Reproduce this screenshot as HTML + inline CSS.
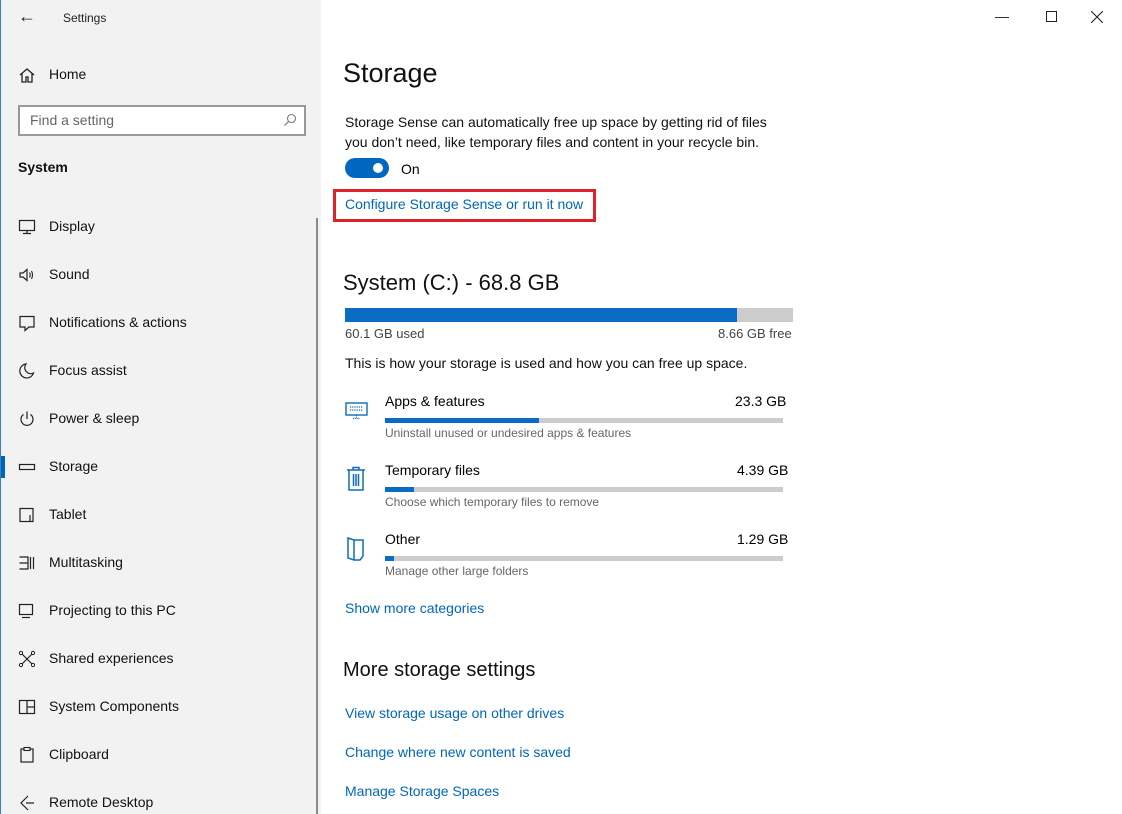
<!DOCTYPE html>
<html><head><meta charset="utf-8"><style>
*{margin:0;padding:0;box-sizing:border-box}
body{width:1122px;height:814px;overflow:hidden;font-family:"Liberation Sans",sans-serif;background:#fff;position:relative;color:#000}
.side{position:absolute;left:0;top:0;width:321px;height:814px;background:#f2f2f2;border-left:1px solid #3a7fc0}
.t{position:absolute;white-space:nowrap}
.nav{position:absolute;left:48px;font-size:14px;color:#111}
.ic{position:absolute;left:17px;width:18px;height:18px}
a,.lk{color:#0067b8;font-size:14px}
.bar{position:absolute;height:5px;background:#ccc}
.bar i{display:block;height:100%;background:#0a6cc4}
</style></head><body>
<div class="side">
<div class="t" style="left:17px;top:6px;font-size:18px;color:#222">&#8592;</div>
<div class="t" style="left:62px;top:11px;font-size:12px;color:#222">Settings</div>
<svg class="ic" style="top:66px" viewBox="0 0 18 18"><path d="M2 9 L9 3 L16 9 M4 7.5 V16 H8 V11 H10 V16 H14 V7.5" fill="none" stroke="#222" stroke-width="1.3"/></svg>
<div class="nav" style="top:66px">Home</div>
<div style="position:absolute;left:17px;top:105px;width:288px;height:31px;border:2px solid #999;background:#fff"></div>
<div class="t" style="left:29px;top:112px;font-size:14px;color:#666">Find a setting</div>
<svg style="position:absolute;left:282px;top:113px" width="14" height="14" viewBox="0 0 14 14"><circle cx="8.5" cy="5.5" r="4" fill="none" stroke="#777" stroke-width="1.1"/><path d="M5.5 8.5 L1.5 12.5" stroke="#777" stroke-width="1.2"/></svg>
<div class="t" style="left:17px;top:159px;font-size:14px;font-weight:bold;color:#111">System</div>
<div style="position:absolute;left:315px;top:218px;width:2px;height:596px;background:#8a8a8a"></div>
<div style="position:absolute;left:0;top:456px;width:4px;height:22px;background:#0067b8"></div>

<svg class="ic" style="top:218px" viewBox="0 0 18 18"><rect x="1.5" y="2.5" width="15" height="10" fill="none" stroke="#222" stroke-width="1.2"/><path d="M9 12.5V15.5M5 15.5H13" stroke="#222" stroke-width="1.2"/></svg>
<div class="nav" style="top:218px">Display</div>
<svg class="ic" style="top:266px" viewBox="0 0 18 18"><path d="M2 7H5L9 3.5V14.5L5 11H2Z" fill="none" stroke="#222" stroke-width="1.2"/><path d="M11.5 6.5Q13 9 11.5 11.5M13.5 5Q15.5 9 13.5 13" fill="none" stroke="#222" stroke-width="1.1"/></svg>
<div class="nav" style="top:266px">Sound</div>
<svg class="ic" style="top:314px" viewBox="0 0 18 18"><path d="M2 2.5H16V13H11L7 16.5V13H2Z" fill="none" stroke="#222" stroke-width="1.2"/></svg>
<div class="nav" style="top:314px">Notifications &amp; actions</div>
<svg class="ic" style="top:362px" viewBox="0 0 18 18"><path d="M8 2A7 7 0 1 0 15.5 11 A6 6 0 0 1 8 2Z" fill="none" stroke="#222" stroke-width="1.2"/></svg>
<div class="nav" style="top:362px">Focus assist</div>
<svg class="ic" style="top:410px" viewBox="0 0 18 18"><path d="M5.5 4.5A6 6 0 1 0 12.5 4.5M9 1.5V9" fill="none" stroke="#222" stroke-width="1.2"/></svg>
<div class="nav" style="top:410px">Power &amp; sleep</div>
<svg class="ic" style="top:458px" viewBox="0 0 18 18"><rect x="1.5" y="6.5" width="15" height="5" fill="none" stroke="#222" stroke-width="1.2"/></svg>
<div class="nav" style="top:458px">Storage</div>
<svg class="ic" style="top:506px" viewBox="0 0 18 18"><rect x="2" y="2.5" width="13" height="13" fill="none" stroke="#222" stroke-width="1.2"/><path d="M12 9V15.5" stroke="#222" stroke-width="1.2"/></svg>
<div class="nav" style="top:506px">Tablet</div>
<svg class="ic" style="top:554px" viewBox="0 0 18 18"><path d="M1.5 3H10V15H1.5M1.5 9H10M12.5 3V15M15.5 3V15" fill="none" stroke="#222" stroke-width="1.2"/></svg>
<div class="nav" style="top:554px">Multitasking</div>
<svg class="ic" style="top:602px" viewBox="0 0 18 18"><rect x="1.5" y="2.5" width="13" height="10" fill="none" stroke="#222" stroke-width="1.2"/><path d="M4 15.5H12" stroke="#222" stroke-width="1.2"/></svg>
<div class="nav" style="top:602px">Projecting to this PC</div>
<svg class="ic" style="top:650px" viewBox="0 0 18 18"><path d="M3 3L15 15M15 3L3 15" stroke="#222" stroke-width="1.2"/><circle cx="3" cy="3" r="1.6" fill="#fff" stroke="#222"/><circle cx="15" cy="3" r="1.6" fill="#fff" stroke="#222"/><circle cx="3" cy="15" r="1.6" fill="#fff" stroke="#222"/><circle cx="15" cy="15" r="1.6" fill="#fff" stroke="#222"/></svg>
<div class="nav" style="top:650px">Shared experiences</div>
<svg class="ic" style="top:698px" viewBox="0 0 18 18"><rect x="1.5" y="2.5" width="15" height="13" fill="none" stroke="#222" stroke-width="1.2"/><path d="M9 2.5V15.5M9 9H16.5" stroke="#222" stroke-width="1.2"/></svg>
<div class="nav" style="top:698px">System Components</div>
<svg class="ic" style="top:746px" viewBox="0 0 18 18"><rect x="3" y="3" width="12" height="13" fill="none" stroke="#222" stroke-width="1.2"/><rect x="6" y="1.5" width="6" height="3" fill="#f2f2f2" stroke="#222" stroke-width="1.1"/></svg>
<div class="nav" style="top:746px">Clipboard</div>
<svg class="ic" style="top:794px" viewBox="0 0 18 18"><path d="M10 2L3 9L10 16M8 9H16" fill="none" stroke="#222" stroke-width="1.2"/></svg>
<div class="nav" style="top:794px">Remote Desktop</div>
</div>

<div class="t" style="left:995px;top:8px;font-size:14px;color:#222">&#8212;</div>
<div style="position:absolute;left:1046px;top:11px;width:11px;height:11px;border:1px solid #222"></div>
<svg style="position:absolute;left:1091px;top:11px" width="12" height="12"><path d="M0 0L12 12M12 0L0 12" stroke="#222" stroke-width="1.1"/></svg>

<div class="t" style="left:343px;top:58px;font-size:27px;color:#111">Storage</div>
<div class="t" style="left:345px;top:112px;font-size:14px;line-height:20px;color:#111">Storage Sense can automatically free up space by getting rid of files<br>you don’t need, like temporary files and content in your recycle bin.</div>
<div style="position:absolute;left:345px;top:158px;width:44px;height:20px;border-radius:10px;background:#0067c0"></div>
<div style="position:absolute;left:373px;top:163px;width:10px;height:10px;border-radius:5px;background:#fff"></div>
<div class="t" style="left:401px;top:161px;font-size:14px">On</div>
<div style="position:absolute;left:333px;top:189px;width:263px;height:33px;border:3px solid #e0202a"></div>
<div class="t lk" style="left:345px;top:196px">Configure Storage Sense or run it now</div>

<div class="t" style="left:343px;top:270px;font-size:22px;color:#111">System (C:) - 68.8 GB</div>
<div style="position:absolute;left:345px;top:308px;width:448px;height:14px;background:#ccc"><div style="width:392px;height:100%;background:#0a6cc4"></div></div>
<div class="t" style="left:345px;top:326px;font-size:13px;color:#444">60.1 GB used</div>
<div class="t" style="left:718px;top:326px;font-size:13px;color:#444">8.66 GB free</div>
<div class="t" style="left:345px;top:355px;font-size:14px;color:#111">This is how your storage is used and how you can free up space.</div>

<svg style="position:absolute;left:345px;top:401px" width="24" height="20" viewBox="0 0 24 20"><rect x="1" y="2" width="21" height="12" fill="none" stroke="#0f6cb8" stroke-width="1.4"/><path d="M5 6H18M5 9H18M11.5 14V17M8 17.5H15" stroke="#0f6cb8" stroke-width="1.2" stroke-dasharray="1.2 1"/></svg>
<div class="t" style="left:385px;top:393px;font-size:14px">Apps &amp; features</div>
<div class="t" style="left:735px;top:393px;font-size:14px">23.3 GB</div>
<div class="bar" style="left:385px;top:418px;width:398px"><i style="width:154px"></i></div>
<div class="t" style="left:385px;top:426px;font-size:12px;color:#666">Uninstall unused or undesired apps &amp; features</div>

<svg style="position:absolute;left:346px;top:466px" width="20" height="26" viewBox="0 0 20 26"><path d="M1 4H19M7 4V1.5H13V4M3 4V24H17V4M7.5 8V20M10 8V20M12.5 8V20" fill="none" stroke="#0f6cb8" stroke-width="1.5"/></svg>
<div class="t" style="left:385px;top:462px;font-size:14px">Temporary files</div>
<div class="t" style="left:737px;top:462px;font-size:14px">4.39 GB</div>
<div class="bar" style="left:385px;top:487px;width:398px"><i style="width:29px"></i></div>
<div class="t" style="left:385px;top:495px;font-size:12px;color:#666">Choose which temporary files to remove</div>

<svg style="position:absolute;left:346px;top:536px" width="20" height="26" viewBox="0 0 20 26"><path d="M2 2L8 4V24L2 22ZM8 4H17V20L14 24H8" fill="none" stroke="#0f6cb8" stroke-width="1.5"/></svg>
<div class="t" style="left:385px;top:531px;font-size:14px">Other</div>
<div class="t" style="left:737px;top:531px;font-size:14px">1.29 GB</div>
<div class="bar" style="left:385px;top:556px;width:398px"><i style="width:9px"></i></div>
<div class="t" style="left:385px;top:564px;font-size:12px;color:#666">Manage other large folders</div>

<div class="t lk" style="left:345px;top:600px">Show more categories</div>
<div class="t" style="left:343px;top:659px;font-size:20px;color:#111">More storage settings</div>
<div class="t lk" style="left:345px;top:705px">View storage usage on other drives</div>
<div class="t lk" style="left:345px;top:744px">Change where new content is saved</div>
<div class="t lk" style="left:345px;top:783px">Manage Storage Spaces</div>
</body></html>
